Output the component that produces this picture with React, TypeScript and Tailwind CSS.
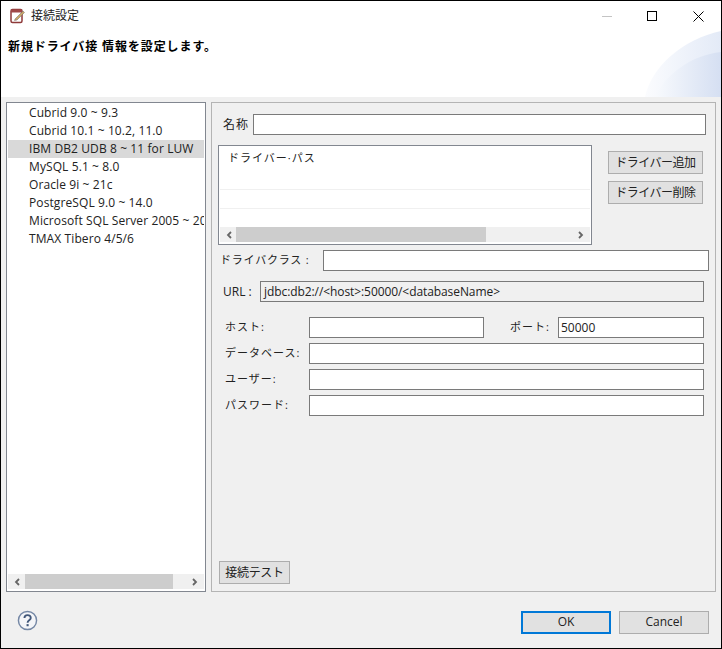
const font = { fontFamily: '"Open Sans", "Noto Sans CJK JP", sans-serif' };

const drivers = [
  "Cubrid 9.0 ~ 9.3",
  "Cubrid 10.1 ~ 10.2, 11.0",
  "IBM DB2 UDB 8 ~ 11 for LUW",
  "MySQL 5.1 ~ 8.0",
  "Oracle 9i ~ 21c",
  "PostgreSQL 9.0 ~ 14.0",
  "Microsoft SQL Server 2005 ~ 2019",
  "TMAX Tibero 4/5/6",
];

function Chevron({ right }: { right?: boolean }) {
  return (
    <svg viewBox="0 0 8 8" className="h-[8px] w-[8px] shrink-0">
      <path d={right ? "M2 1l3 3-3 3" : "M6 1L3 4l3 3"} fill="none" stroke="#666" strokeWidth="1.8" />
    </svg>
  );
}

function Field({ className }: { className: string }) {
  return <div className={`h-[21px] border border-[#7a7a7a] bg-white ${className}`} />;
}

function WinButton({ label, className, primary }: { label: string; className: string; primary?: boolean }) {
  return (
    <div
      className={`flex h-[23px] items-center justify-center bg-[#e1e1e1] text-[#222] ${
        primary ? "border-2 border-[#0078d7]" : "border border-[#adadad]"
      } ${className}`}
    >
      {label}
    </div>
  );
}

function FormRow({ label, children }: { label: string; children: React.ReactNode }) {
  return (
    <div className="flex h-[21px] items-center">
      <span className="w-[91px] whitespace-nowrap pl-[7px] text-[11px] tracking-[1px] text-[#222]">{label}</span>
      {children}
    </div>
  );
}

export default function App() {
  return (
    <div className="flex h-[649px] w-[722px] flex-col overflow-hidden border border-black bg-[#f0f0f0]" style={font}>
      {/* title bar */}
      <div className="flex h-[30px] shrink-0 items-center bg-white pl-[9px]">
        <svg viewBox="0 0 16 16" className="h-[16px] w-[16px]">
          <rect x="1" y="1.500" width="11" height="13" rx="1.500" fill="#fff" stroke="#8e3a3a" strokeWidth="1.500" />
          <rect x="1" y="1.500" width="11" height="3" fill="#a04848" />
          <path d="M5 11L13 3l1.500 1.500L7 12l-2.500.5z" fill="#c9a76a" stroke="#6d6d6d" strokeWidth=".5" />
        </svg>
        <span className="ml-[5px] text-[12px] text-[#222]">接続設定</span>
        <div className="ml-auto flex items-center">
          <div className="h-px w-[10px] bg-[#c4c4c4]" />
          <div className="ml-[35px] h-[10px] w-[10px] border border-black" />
          <svg viewBox="0 0 11 11" className="ml-[36px] mr-[17px] h-[11px] w-[11px]">
            <path d="M.5.500l10 10M10.500.500l-10 10" stroke="#000" strokeWidth="1" />
          </svg>
        </div>
      </div>

      {/* header */}
      <div className="relative h-[66px] shrink-0 bg-white pl-[7px]">
        <p className="pt-[8px] text-[12px] font-bold leading-[16px] tracking-[0.9px] text-black">新規ドライバ接 情報を設定します。</p>
        <svg viewBox="0 0 76 66" className="absolute right-0 top-0 h-[66px] w-[76px]">
          <defs>
            <linearGradient id="hdr" x1="0" x2="1" y1="0" y2="0">
              <stop offset="0" stopColor="#fbfcfe" />
              <stop offset="1" stopColor="#e3eaf7" />
            </linearGradient>
            <linearGradient id="hdr2" x1="0" x2="1" y1="0" y2="0">
              <stop offset="0" stopColor="#f8fafd" />
              <stop offset="1" stopColor="#d5dff2" />
            </linearGradient>
          </defs>
          <path d="M0 66C6 36 38 8 76 0V66Z" fill="url(#hdr)" />
          <path d="M10 66C20 44 46 24 76 21V66Z" fill="url(#hdr2)" />
        </svg>
      </div>

      {/* body */}
      <div className="flex h-[495px] shrink-0 gap-[5px] pl-[5px] pt-[5px]">
        <div className="flex h-[490px] w-[200px] flex-col border border-[#828790] bg-white px-px pb-[2px] pt-px">
          <div className="flex-1 overflow-hidden">
            {drivers.map((name, i) => (
              <div
                key={name}
                className={`h-[18px] whitespace-nowrap pl-[21px] text-[12px] leading-[18px] tracking-[0.1px] text-[#222] ${i === 2 ? "bg-[#d9d9d9]" : ""}`}
              >
                {name}
              </div>
            ))}
          </div>
          <div className="flex h-[15px] items-center bg-[#f0f0f0] px-[5px]">
            <Chevron />
            <div className="ml-[4px] mr-[18px] h-[15px] flex-1 bg-[#cdcdcd]" />
            <Chevron right />
          </div>
        </div>

        <div className="flex h-[490px] w-[505px] flex-col border border-[#b4b4b4] bg-[#f0f0f0] pl-[6px]">
          <div className="mt-[11px] flex h-[21px] items-center">
            <span className="w-[35px] pl-[5px] text-[12px] tracking-[1px] text-[#222]">名称</span>
            <Field className="w-[453px]" />
          </div>

          <div className="mt-[10px] flex">
            <div className="flex h-[100px] w-[374px] flex-col border border-[#828790] bg-white px-px pt-px">
              <div className="h-[42px] pl-[8px] pt-[3px] text-[11px] tracking-[1px] text-[#222]">ドライバー·パス</div>
              <div className="h-[19px] border-t border-[#f0f0f0]" />
              <div className="h-[19px] border-t border-[#f0f0f0]" />
              <div className="flex h-[15px] items-center bg-[#f0f0f0] px-[5px]">
                <Chevron />
                <div className="ml-[3px] mr-[91px] h-[15px] flex-1 bg-[#cdcdcd]" />
                <Chevron right />
              </div>
            </div>
            <div className="ml-[16px] mt-[6px] flex flex-col gap-[7px]">
              <WinButton label="ドライバー追加" className="w-[95px] text-[12px] tracking-[-0.5px]" />
              <WinButton label="ドライバー削除" className="w-[95px] text-[12px] tracking-[-0.5px]" />
            </div>
          </div>

          <div className="mt-[5px] flex h-[21px] items-center">
            <span className="w-[105px] whitespace-nowrap pl-[2px] text-[11px] tracking-[0.8px] text-[#222]">ドライバクラス :</span>
            <Field className="w-[386px]" />
          </div>

          <div className="mt-[10px] flex h-[21px] items-center">
            <span className="w-[42px] pl-[5px] text-[12px] text-[#222]">URL :</span>
            <div className="flex h-[21px] w-[444px] items-center border border-[#7a7a7a] bg-[#f0f0f0] pl-[3px] text-[12px] tracking-[-0.08px] text-[#222]">
              {"jdbc:db2://<host>:50000/<databaseName>"}
            </div>
          </div>

          <div className="mt-[15px] flex flex-col gap-[5px]">
            <FormRow label="ホスト:">
              <Field className="w-[175px]" />
              <span className="ml-[26px] w-[48px] whitespace-nowrap text-[11px] tracking-[1px] text-[#222]">ポート:</span>
              <div className="flex h-[21px] w-[146px] items-center border border-[#7a7a7a] bg-white pl-[2px] text-[12px] text-[#222]">50000</div>
            </FormRow>
            <FormRow label="データベース:">
              <Field className="w-[395px]" />
            </FormRow>
            <FormRow label="ユーザー:">
              <Field className="w-[395px]" />
            </FormRow>
            <FormRow label="パスワード:">
              <Field className="w-[395px]" />
            </FormRow>
          </div>

          <div className="mb-[7px] mt-auto">
            <WinButton label="接続テスト" className="ml-px w-[71px] text-[12px] tracking-[-0.3px]" />
          </div>
        </div>
      </div>

      {/* footer */}
      <div className="flex flex-1 items-center pl-[16px] pr-[12px] pt-[4px]">
        <svg viewBox="0 0 22 22" className="mb-[3px] h-[21px] w-[21px]">
          <circle cx="11" cy="11" r="9.500" fill="#f4f5f8" stroke="#7487a5" strokeWidth="1.500" />
          <path d="M7.800 8.500c0-4.200 6.600-4.200 6.600-.2 0 2.500-3.300 2.500-3.300 5" fill="none" stroke="#41577a" strokeWidth="2" />
          <rect x="10" y="14.800" width="2.200" height="2.200" fill="#41577a" />
        </svg>
        <div className="ml-auto flex gap-[8px]">
          <WinButton label="OK" primary className="w-[90px] text-[12px]" />
          <WinButton label="Cancel" className="w-[90px] text-[12px]" />
        </div>
      </div>
    </div>
  );
}
